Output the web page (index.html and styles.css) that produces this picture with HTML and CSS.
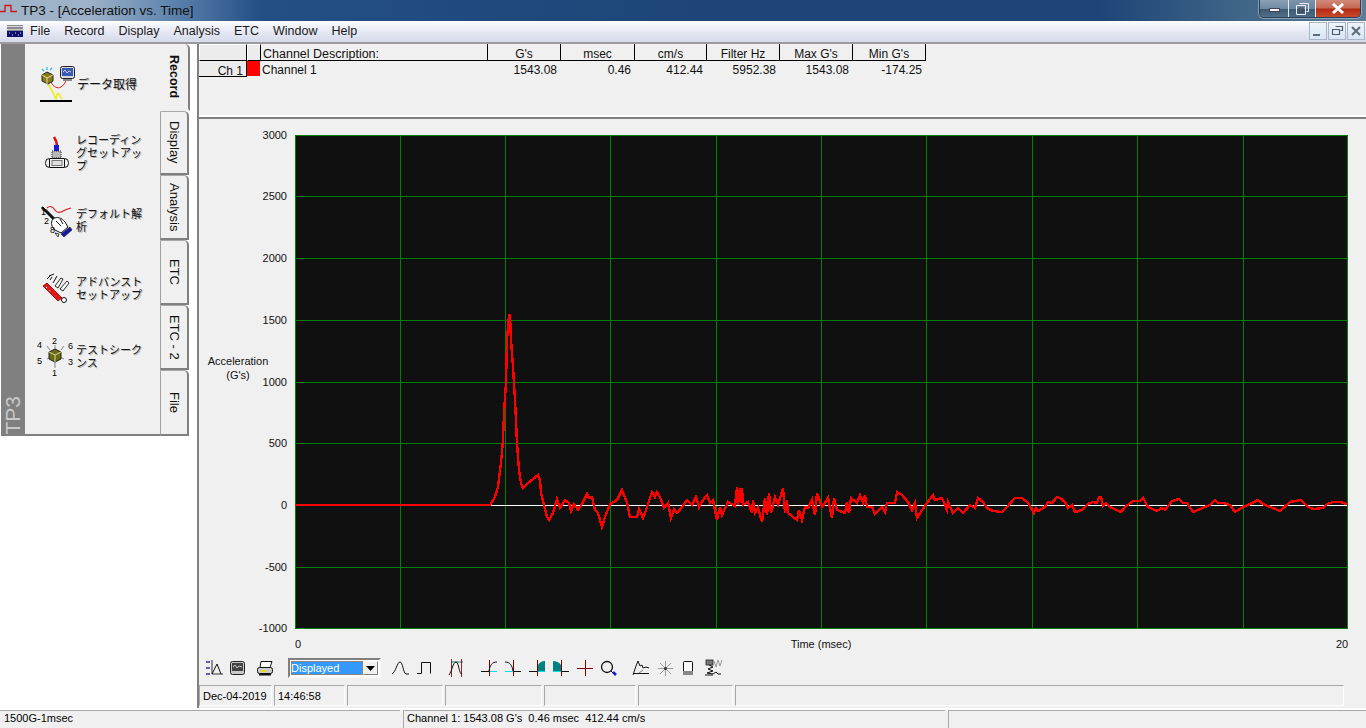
FILE: index.html
```html
<!DOCTYPE html>
<html lang="en">
<head>
<meta charset="utf-8">
<title>TP3 - [Acceleration vs. Time]</title>
<link rel="stylesheet" href="styles.css">
</head>
<body>
<div class="app">
  <header class="titlebar">
    <svg class="app-icon" width="18" height="21" viewBox="0 0 18 21"><path d="M0 11.500H5V5.500H11V11.500H17" fill="none" stroke="#d01818" stroke-width="1.400"/></svg>
    <span class="title-text">TP3 - [Acceleration vs. Time]</span>
    <div class="winbtns">
      <div class="winbtn btn-min"><span class="glyph-min"></span></div>
      <div class="winbtn btn-max"><svg width="13" height="12" viewBox="0 0 13 12"><path d="M3.500 .5h9v8h-2M.5 2.500h9v9h-9z" fill="none" stroke="#eef" stroke-width="1"/><rect x="3" y="5" width="4" height="4" fill="none" stroke="#445" /></svg></div>
      <div class="winbtn btn-close"><svg width="14" height="11" viewBox="0 0 14 11"><path d="M2 1l10 9M12 1L2 10" stroke="#fff" stroke-width="3"/></svg></div>
    </div>
  </header>

  <nav class="menubar">
    <svg class="menu-logo" width="16" height="12" viewBox="0 0 16 12"><rect width="16" height="6" fill="#8a8a90"/><rect y="1" width="16" height="1" fill="#d8d8d8"/><rect y="4" width="16" height="1" fill="#c8c8c8"/><rect y="6" width="16" height="6" fill="#10106a"/><path d="M2 8h1M5 10h1M8 8h1M11 10h1M13 8h1" stroke="#dde" stroke-width="1"/></svg>
    <span class="menu-item item-file">File</span>
    <span class="menu-item">Record</span>
    <span class="menu-item">Display</span>
    <span class="menu-item">Analysis</span>
    <span class="menu-item">ETC</span>
    <span class="menu-item">Window</span>
    <span class="menu-item">Help</span>
    <div class="mdi-btns">
      <div class="mdi-btn"><svg width="16" height="16" viewBox="0 0 16 16"><rect x="3" y="11" width="7" height="2" fill="#5f6b7a"/></svg></div>
      <div class="mdi-btn"><svg width="16" height="16" viewBox="0 0 16 16"><path d="M6.500 3.500h7v4h-2M3.500 6.500h7v5h-7z" fill="none" stroke="#4f5b6a" stroke-width="1.200"/></svg></div>
      <div class="mdi-btn"><svg width="16" height="16" viewBox="0 0 16 16"><path d="M4 4l8 8M12 4l-8 8" stroke="#5f6b7a" stroke-width="2"/></svg></div>
    </div>
  </nav>

  <main class="main">
    <aside class="left">
      <div class="panel">
        <div class="strip"><span class="strip-text">TP3</span></div>
        <div class="panel-body">
          <div class="item">
            <svg class="item-icon" width="40" height="44" viewBox="36 62 40 44">
              <path d="M42 69l2 2M47 67v3M52 68l-2 2" stroke="#28b8d8" stroke-width="1.200"/>
              <path d="M48 84C52 90 54 94 56 99C57 94 58 92 59 94C60 96 61 98 62 99" fill="none" stroke="#ecec20" stroke-width="1.600"/>
              <path d="M51 82C53 87 58 89 61 87C63 86 64 84 66 81" fill="none" stroke="#e02020" stroke-width="1"/>
              <path d="M42 75l5-3 6 3v6l-5 3-6-3z" fill="#8a7a18" stroke="#222" stroke-width="1"/>
              <path d="M42 75l5 3 6-3M47 78v6" fill="none" stroke="#e8e0a0" stroke-width="1"/>
              <rect x="60.500" y="66.500" width="14" height="12" rx="2" fill="#d8d8d8" stroke="#222"/>
              <rect x="62" y="68" width="11" height="8" fill="#3a5ab8"/>
              <path d="M63 72l2-2 2 3 2-2 2 1" fill="none" stroke="#e8e8ff" stroke-width=".8"/>
              <rect x="63" y="79" width="9" height="2" fill="#888"/>
              <rect x="40" y="100" width="32" height="2" fill="#000"/>
            </svg>
            <span class="item-text first">データ取得</span>
          </div>
          <div class="item">
            <svg class="item-icon" width="40" height="44" viewBox="36 130 40 44">
              <path d="M54 137c2 3 3 5 3 9" fill="none" stroke="#e01010" stroke-width="2.500"/>
              <rect x="54" y="145" width="5" height="6" fill="#1818d8"/>
              <rect x="52" y="151" width="9" height="7" fill="#b8b8b8" stroke="#222" stroke-dasharray="1 1"/>
              <rect x="45.500" y="158.500" width="23" height="9" rx="4" fill="#f0f0f0" stroke="#111"/>
              <path d="M49.500 159v8M64.500 159v8" stroke="#111"/>
              <rect x="52" y="160.500" width="10" height="5" fill="#e0e0e0" stroke="#777"/>
            </svg>
            <span class="item-text">レコーディン<br>グセットアッ<br>プ</span>
          </div>
          <div class="item">
            <svg class="item-icon" width="40" height="44" viewBox="36 198 40 44">
              <path d="M47 208c3-3 6-1 8 2s5 3 8 1c2-1 4-2 8-3" fill="none" stroke="#d81818" stroke-width="1.200"/>
              <path d="M42 207l16 16" stroke="#111" stroke-width="3"/>
              <path d="M43 206l3 3" stroke="#fff" stroke-width="1"/>
              <path d="M53 219c4-3 9-1 12 3l3 5-7 6-6-3c-3-3-5-7-2-11z" fill="#fff" stroke="#111"/>
              <path d="M56 221l5 5M60 219l3 5" stroke="#111"/>
              <path d="M61 234l9-7 2 3-8 7z" fill="#1818b0" stroke="#111" stroke-width=".6"/>
              <text class="icon-num" x="41" y="215">1</text>
              <text class="icon-num" x="44" y="224">2</text>
              <text class="icon-num" x="50" y="233">8</text>
              <path d="M55 233l3 4 1-3z" fill="#fff" stroke="#111" stroke-width=".8"/>
            </svg>
            <span class="item-text">デフォルト解<br>析</span>
          </div>
          <div class="item">
            <svg class="item-icon" width="40" height="44" viewBox="36 266 40 44">
              <path d="M53 283l4-7M50 280l2-3M47 279l4-4M49 276l5-2" stroke="#111" stroke-width="1"/>
              <path d="M55 286l6-8 2 1-5 9zM60 289l7-8 2 2-6 8z" fill="#fff" stroke="#111" stroke-width=".9"/>
              <path d="M43 286l4-3 15 15-4 3z" fill="#e01818" stroke="#800" stroke-width=".8"/>
              <path d="M46 287l1 1M49 290l1 1" stroke="#fff"/>
              <circle cx="64" cy="300" r="2.500" fill="#fff" stroke="#111"/>
            </svg>
            <span class="item-text">アドバンスト<br>セットアップ</span>
          </div>
          <div class="item">
            <svg class="item-icon" width="40" height="44" viewBox="36 334 40 44">
              <path d="M55 345v5M55 362v6M47 346l3 4M64 346l-3 4M47 359l4-2M64 359l-4-2" stroke="#888" stroke-width="1"/>
              <path d="M49 352l6-3 6 3v7l-6 3-6-3z" fill="#6a6a14" stroke="#222"/>
              <path d="M49 352l6 3 6-3M55 355v7" fill="none" stroke="#d8d890"/>
              <text class="icon-num" x="52" y="344">2</text>
              <text class="icon-num" x="37" y="348">4</text>
              <text class="icon-num" x="68" y="349">6</text>
              <text class="icon-num" x="37" y="364">5</text>
              <text class="icon-num" x="68" y="365">3</text>
              <text class="icon-num" x="52" y="376">1</text>
            </svg>
            <span class="item-text">テストシーク<br>ンス</span>
          </div>
        </div>
        <div class="tabs">
          <div class="tab tab-active"><span class="tab-text">Record</span></div>
          <div class="tab tab-display"><span class="tab-text">Display</span></div>
          <div class="tab tab-analysis"><span class="tab-text">Analysis</span></div>
          <div class="tab tab-etc"><span class="tab-text">ETC</span></div>
          <div class="tab tab-etc2"><span class="tab-text">ETC - 2</span></div>
          <div class="tab tab-file"><span class="tab-text">File</span></div>
        </div>
      </div>
    </aside>

    <section class="right">
      <div class="table-area">
        <div class="grid">
          <div class="hcell hcell-blank"></div>
          <div class="hcell hcell-blank"></div>
          <div class="hcell hcell-desc">Channel Description:</div>
          <div class="hcell">G's</div>
          <div class="hcell">msec</div>
          <div class="hcell">cm/s</div>
          <div class="hcell">Filter Hz</div>
          <div class="hcell">Max G's</div>
          <div class="hcell">Min G's</div>
          <div class="rcell rcell-ch">Ch 1</div>
          <div class="rcell rcell-swatch"><span class="swatch"></span></div>
          <div class="rcell rcell-desc">Channel 1</div>
          <div class="rcell num">1543.08</div>
          <div class="rcell num">0.46</div>
          <div class="rcell num">412.44</div>
          <div class="rcell num">5952.38</div>
          <div class="rcell num">1543.08</div>
          <div class="rcell num">-174.25</div>
        </div>
      </div>

      <div class="chart">
        <svg class="chart-svg" width="1167" height="536" viewBox="199 119 1167 536">
          <rect x="295" y="135" width="1052" height="494" fill="#101010"/>
          <g class="gridlines">
            <path d="M295.500 135V629M400.500 135V629M505.500 135V629M610.500 135V629M716.500 135V629M821.500 135V629M926.500 135V629M1032.500 135V629M1137.500 135V629M1243.500 135V629M1347.500 135V629"/>
            <path d="M295 135.500H1348M295 196.500H1348M295 258.500H1348M295 320.500H1348M295 382.500H1348M295 443.500H1348M295 567.500H1348M295 628.500H1348"/>
          </g>
          <rect x="490" y="505" width="857" height="1" fill="#ffffff"/>
          <polyline class="trace" points="295,505 490,505 495,497 498,487 501,463 503,440 504,413 506,383 507,340 509,315 510,315 511,340 513,367 515,400 517,443 519,470 521,483 523,488 528,483 533,479 538,475 540,480 541,493 544,505 547,517 549,520 553,513 557,499 560,508 565,500 569,503 571,511 574,504 578,510 582,504 587,494 589,498 592,497 595,510 598,513 602,527 605,517 610,504 617,500 622,490 627,503 630,517 637,517 639,509 643,518 646,510 652,492 655,497 657,492 660,497 664,508 668,503 671,518 674,509 677,513 682,507 687,500 692,505 696,497 699,507 703,500 707,495 710,503 713,500 717,520 720,507 722,515 728,502 735,506 737,487 738,505 740,488 741,503 742,488 743,505 748,502 752,513 753,500 755,513 758,508 762,522 765,498 767,515 769,493 771,513 775,497 778,505 783,488 785,513 787,500 788,513 797,520 799,510 802,520 805,507 808,508 812,500 815,515 817,493 822,507 825,503 828,498 832,518 834,498 837,510 845,513 847,502 849,513 851,498 857,503 860,495 863,503 865,495 867,507 872,507 875,514 882,507 885,512 887,503 895,503 897,492 902,495 908,502 912,510 915,503 917,518 922,510 927,503 933,495 935,500 942,498 947,510 948,502 953,513 958,508 963,513 970,505 975,508 978,498 983,502 987,508 993,511 1002,512 1007,507 1015,498 1022,498 1028,503 1034,513 1036,508 1038,511 1045,507 1048,502 1052,503 1057,497 1060,498 1065,502 1068,508 1072,505 1075,512 1082,510 1088,504 1093,502 1097,503 1099,497 1101,497 1103,506 1106,503 1110,507 1121,512 1125,507 1133,501 1140,501 1143,498 1148,507 1157,511 1162,508 1165,510 1172,501 1179,499 1183,503 1187,503 1193,512 1200,509 1210,505 1215,500 1218,503 1223,503 1230,505 1235,512 1243,507 1250,504 1258,500 1263,504 1270,507 1280,511 1290,502 1301,500 1308,507 1313,509 1323,508 1327,504 1333,502 1340,502 1347,504"/>
          <g class="ylabels">
            <text x="287" y="139">3000</text>
            <text x="287" y="200">2500</text>
            <text x="287" y="262">2000</text>
            <text x="287" y="324">1500</text>
            <text x="287" y="386">1000</text>
            <text x="287" y="447">500</text>
            <text x="287" y="509">0</text>
            <text x="287" y="571">-500</text>
            <text x="287" y="632">-1000</text>
          </g>
          <g class="axis-title">
            <text x="238" y="365">Acceleration</text>
            <text x="238" y="379">(G's)</text>
            <text x="821" y="648">Time (msec)</text>
            <text x="298" y="648">0</text>
            <text x="1342" y="648">20</text>
          </g>
        </svg>
      </div>

      <div class="toolbar">
        <div class="tgroup tg-a">
          <svg class="ti" width="24" height="24" viewBox="0 0 24 24"><path d="M5 6h4M5 12h4M5 18h4" stroke="#2a2ab0" stroke-width="1.500"/><path d="M11 4v14h11" fill="none" stroke="#333"/><path d="M11 18l5-10 4 10" fill="none" stroke="#111"/></svg>
          <svg class="ti" width="24" height="24" viewBox="0 0 24 24"><rect x="5.500" y="5.500" width="14" height="13" rx="2" fill="#c8c8c8" stroke="#222"/><rect x="7" y="7" width="11" height="8" fill="#444"/><path d="M8 11l2-2 2 3 2-2 3 1" fill="none" stroke="#ccc"/></svg>
        </div>
        <div class="tgroup tg-b">
          <svg class="ti" width="24" height="24" viewBox="0 0 24 24"><path d="M8 5.500h11l-2 6H7z" fill="#fff" stroke="#111"/><rect x="4.500" y="11.500" width="15" height="6" rx="2" fill="#ccc" stroke="#111"/><rect x="8" y="14" width="5" height="2" fill="#e8d820"/><path d="M6 18.500h12" stroke="#111" stroke-width="2"/></svg>
        </div>
        <div class="select">
          <div class="select-field"><span class="select-text">Displayed</span></div>
          <div class="select-arrow"><svg width="9" height="5" viewBox="0 0 9 5"><path d="M0 0h9L4.500 5z" fill="#000"/></svg></div>
        </div>
        <div class="tgroup tg-c">
          <svg class="ti" width="24" height="24" viewBox="0 0 24 24"><path d="M3 18C7 16 8 6 11 6C14 6 14 17 17 18L20 18" fill="none" stroke="#111"/></svg>
          <svg class="ti" width="24" height="24" viewBox="0 0 24 24"><path d="M4 17.500H8.500V6.500H17.500V17.500" fill="none" stroke="#111"/></svg>
        </div>
        <div class="tgroup tg-d">
          <svg class="ti" width="24" height="24" viewBox="0 0 24 24"><path d="M7 6H19" stroke="#008080"/><path d="M7.500 3V21M17.500 3V21" stroke="#a02020"/><path d="M5 19C8 15 9 6 12 6C15 6 15 19 18 18" fill="none" stroke="#111"/></svg>
        </div>
        <div class="tgroup tg-e">
          <svg class="ti" width="24" height="24" viewBox="0 0 24 24"><path d="M3 15.500H19" stroke="#111"/><path d="M12 15.500H19" stroke="#00e0e8"/><path d="M11.500 4V20" stroke="#800000"/><path d="M11 15C12 9 14 6 19 6" fill="none" stroke="#111"/></svg>
          <svg class="ti" width="24" height="24" viewBox="0 0 24 24"><path d="M3 15.500H19" stroke="#111"/><path d="M3 15.500H11" stroke="#00e0e8"/><path d="M11.500 4V20" stroke="#800000"/><path d="M3 6C8 6 10 9 11 15" fill="none" stroke="#111"/></svg>
          <svg class="ti" width="24" height="24" viewBox="0 0 24 24"><path d="M12 15V9C14 6 16 5 19 5V15z" fill="#008080"/><path d="M3 15.500H19" stroke="#111"/><path d="M12 15.500H19" stroke="#00e0e8"/><path d="M11.500 4V20" stroke="#800000"/></svg>
          <svg class="ti" width="24" height="24" viewBox="0 0 24 24"><path d="M3 5C6 5 9 6 11 9V15H3z" fill="#008080"/><path d="M3 15.500H19" stroke="#111"/><path d="M3 15.500H11" stroke="#00e0e8"/><path d="M11.500 4V20" stroke="#800000"/></svg>
          <svg class="ti" width="24" height="24" viewBox="0 0 24 24"><path d="M3 12.500H19M11.500 4V20" stroke="#800000"/></svg>
          <svg class="ti" width="24" height="24" viewBox="0 0 24 24"><circle cx="9" cy="11" r="5.500" fill="none" stroke="#111" stroke-width="1.300"/><path d="M13 15l2 2" stroke="#111"/><path d="M15 16l3 3" stroke="#1818d0" stroke-width="2.500"/></svg>
        </div>
        <div class="tgroup tg-f">
          <svg class="ti" width="24" height="24" viewBox="0 0 24 24"><path d="M4 17.500H20" stroke="#111"/><path d="M4 19L7 10 9 5 11 10 13 9 14 12 17 11 20 12" fill="none" stroke="#111"/><path d="M10 17l4-3" stroke="#777"/></svg>
          <svg class="ti" width="24" height="24" viewBox="0 0 24 24"><path d="M5 12.500H20M12.500 5V20M7 7l11 11M18 7L7 18" stroke="#9a9a9a"/><circle cx="12.500" cy="12.500" r="1.500" fill="#333"/></svg>
          <svg class="ti" width="24" height="24" viewBox="0 0 24 24"><rect x="6.500" y="5.500" width="9" height="13" rx="1" fill="#f8f8f8" stroke="#111"/><rect x="6" y="15" width="10" height="4" fill="#888"/></svg>
          <svg class="ti" width="24" height="24" viewBox="0 0 24 24"><rect x="5" y="4" width="7" height="5" fill="#777" stroke="#222" stroke-width=".8"/><path d="M8 9l4 2-5 2 5 2-6 2 6 1 3-2 2 2h3M4 19h8" fill="none" stroke="#111"/><path d="M13 5l2 6 2-7 2 6 2-6" fill="none" stroke="#999"/></svg>
        </div>
      </div>

      <div class="inner-status">
        <div class="scell sc-date">Dec-04-2019</div>
        <div class="scell sc-time">14:46:58</div>
        <div class="scell sc-a"></div>
        <div class="scell sc-b"></div>
        <div class="scell sc-c"></div>
        <div class="scell sc-d"></div>
        <div class="scell sc-e"></div>
      </div>
    </section>
  </main>

  <footer class="statusbar">
    <div class="ocell oc-a">1500G-1msec</div>
    <div class="ocell oc-b">Channel 1: 1543.08 G's&nbsp;&nbsp;0.46 msec&nbsp;&nbsp;412.44 cm/s</div>
    <div class="ocell oc-c"></div>
  </footer>
</div>
</body>
</html>
```
FILE: styles.css
```css
* { box-sizing: border-box; }
html, body { margin: 0; padding: 0; height: 100%; overflow: hidden; }
body { font-family: "Liberation Sans", Arial, sans-serif; font-size: 12px; color: #000; background: #f0f0f0; }
.app { width: 1366px; height: 728px; display: flex; flex-direction: column; }

.titlebar {
  height: 21px; flex: none; display: flex; align-items: flex-start;
  background: linear-gradient(90deg, #9fb3c9 0, #9db2c8 90px, #5f84ae 170px, #234f86 260px, #1d4577 700px, #1d4577 1100px, #3f6587 1240px, #5b7d98 1366px);
}
.app-icon { flex: none; }
.title-text { margin-left: 3px; font-size: 13.500px; line-height: 21px; color: #111; white-space: nowrap; }
.winbtns { margin-left: auto; margin-right: 5px; display: flex; height: 18px; border: 1px solid #2a3f56; border-top: 0; border-radius: 0 0 5px 5px; overflow: hidden; box-shadow: 0 0 0 1px rgba(255,255,255,.35); }
.winbtn { display: flex; align-items: center; justify-content: center; height: 100%; }
.btn-min { width: 29px; background: linear-gradient(#8aa0b4 0, #6f8aa2 50%, #3b5a76 55%, #536f88 100%); border-right: 1px solid #e0e8f0; }
.glyph-min { width: 11px; height: 4px; margin-top: 3px; background: #f4f4f4; border: 1px solid #445; }
.btn-max { width: 27px; background: linear-gradient(#7a93aa 0, #6a859e 50%, #3b5a76 55%, #4f6c85 100%); border-right: 1px solid #e0e8f0; }
.btn-close { width: 44px; background: linear-gradient(#d08a78 0, #c66a55 45%, #b32b12 55%, #c74a2e 100%); }

.menubar {
  height: 23px; flex: none; display: flex; align-items: center; padding-left: 7px; padding-bottom: 2px;
  background: linear-gradient(#fdfdfe 0, #eef0f8 30%, #d8dcec 90%, #d8dcec 100%);
  border-bottom: 2px solid #9a9aa0;
}
.menu-logo { flex: none; margin-right: 7px; }
.menu-item { margin-right: 14px; font-size: 12.500px; line-height: 18px; color: #1a1a1a; white-space: nowrap; }
.mdi-btns { margin-left: auto; display: flex; gap: 1px; padding-right: 1px; }
.mdi-btn { width: 18px; height: 18px; display: flex; align-items: center; justify-content: center; background: linear-gradient(#eef4fa, #d6e6f4); border: 1px solid #aab4c4; }

.main { flex: 1; display: flex; min-height: 0; }
.left { width: 197px; flex: none; background: #fff; }
.panel { height: 392px; display: flex; }
.strip { width: 25px; flex: none; display: flex; align-items: flex-end; justify-content: center; background: #808080; border-left: 1px solid #ffffff; }
.strip-text { writing-mode: vertical-rl; transform: rotate(180deg); font-size: 21px; line-height: 22px; color: #c8c8c8; padding-top: 1px; }
.panel-body { width: 135px; flex: none; padding-top: 6px; background: #f0f0f0; border-bottom: 2px solid #808080; }
.item { height: 68px; display: flex; align-items: center; padding-left: 11px; }
.item-icon { flex: none; }
.icon-num { font-family: "Liberation Sans", Arial, sans-serif; font-size: 9px; fill: #000; }
.item-text { margin-left: 0; font-family: "Noto Sans CJK JP", "Liberation Sans", sans-serif; font-size: 11px; line-height: 13px; color: #111; white-space: nowrap; text-shadow: 1px 1px 0 #b0b0b0; }
.item-text.first { font-size: 12px; margin-left: 1px; margin-top: -2px; }

.tabs { width: 30px; flex: none; display: flex; flex-direction: column; }
.tab { display: flex; align-items: center; justify-content: center; width: 29px; background: #f0f0f0; border: 1px solid #a8a8a8; border-right: 2px solid #808080; border-bottom: 2px solid #808080; border-left-color: #a0a0a0; border-radius: 0 5px 0 0; }
.tab-text { writing-mode: vertical-rl; font-size: 13px; line-height: 15px; white-space: nowrap; color: #111; margin-left: 1px; }
.tab-active { height: 67px; width: 31px; margin-left: -1px; border-left: 0; border-top: 0; border-bottom-color: #f0f0f0; padding-right: 1px; }
.tab-active .tab-text { font-weight: bold; font-size: 12.500px; margin-left: 1px; }
.tab-display { height: 64px; }
.tab-analysis { height: 65px; }
.tab-etc { height: 65px; }
.tab-etc2 { height: 65px; }
.tab-file { height: 66px; }

.right { flex: 1; min-width: 0; display: flex; flex-direction: column; border-left: 2px solid #808080; }
.table-area { height: 75px; flex: none; border-bottom: 2px solid #808080; box-shadow: inset 0 -2px 0 #ffffff; }
.grid { display: grid; grid-template-columns: 48px 14px 227px 73px 74px 72px 73px 73px 73px; grid-template-rows: 17px 16px; }
.hcell { border-right: 1px solid #000; border-bottom: 1px solid #000; text-align: center; font-size: 12px; line-height: 21px; height: 17px; overflow: hidden; color: #111; }
.hcell-blank { background: #ececec; border-top: 1px solid #fff; border-left: 1px solid #fff; }
.hcell-desc { text-align: left; padding-left: 2px; font-size: 12.500px; }
.rcell { font-size: 12px; line-height: 16px; color: #111; white-space: nowrap; }
.rcell-ch { text-align: right; padding-right: 3px; background: #ececec; border-right: 1px solid #000; border-bottom: 1px solid #000; line-height: 20px; }
.rcell-swatch { display: flex; }
.swatch { width: 13px; height: 15px; background: #ff0000; }
.rcell-desc { padding-left: 1px; line-height: 19px; }
.num { text-align: right; padding-right: 4px; line-height: 19px; }

.chart { flex: 1; min-height: 0; }
.chart-svg { display: block; }
.gridlines path { fill: none; stroke: #008000; stroke-width: 1; }
.trace { fill: none; stroke: #ff0000; stroke-width: 2.400; stroke-linejoin: miter; shape-rendering: crispEdges; }
.ylabels text { font-size: 11px; text-anchor: end; fill: #111; }
.axis-title text { font-size: 11px; text-anchor: middle; fill: #111; }

.toolbar { height: 28px; flex: none; display: flex; align-items: center; padding-bottom: 4px; }
.tgroup { display: flex; flex: none; }
.ti { display: block; flex: none; }
.tg-a { margin-left: 2px; }
.tg-b { margin-left: 4px; }
.select { margin-left: 11px; width: 93px; height: 20px; flex: none; display: flex; border: 2px solid #808080; border-right-color: #f8f8f8; border-bottom-color: #f8f8f8; background: #fff; padding: 1px; }
.select-field { flex: 1; background: #3399ff; outline: 1px dotted #e07000; outline-offset: -1px; }
.select-text { display: block; padding-left: 0; font-size: 11px; line-height: 14px; color: #fff; }
.select-arrow { width: 15px; flex: none; display: flex; align-items: center; justify-content: center; background: #f0f0f0; border: 1px solid #808080; border-top-color: #fff; border-left-color: #fff; }
.tg-c { margin-left: 8px; }
.tg-d { margin-left: 7px; }
.tg-e { margin-left: 10px; }
.tg-f { margin-left: 7px; }

.inner-status { height: 24px; flex: none; display: flex; gap: 2px; padding: 1px 0 2px 0; }
.scell { height: 21px; padding-left: 3px; font-size: 11px; line-height: 20px; border: 1px solid #a8a8a8; border-right-color: #fff; border-bottom-color: #fff; white-space: nowrap; }
.sc-date { width: 73px; }
.sc-time { width: 71px; }
.sc-a { width: 96px; }
.sc-b { width: 97px; }
.sc-c { width: 92px; }
.sc-d { width: 95px; }
.sc-e { width: 609px; }

.statusbar { height: 20px; flex: none; display: flex; gap: 3px; border-top: 2px solid #ffffff; }
.ocell { height: 18px; padding-left: 3px; font-size: 11px; line-height: 15px; border-top: 1px solid #a8a8a8; border-left: 1px solid #a8a8a8; white-space: nowrap; }
.oc-a { width: 400px; border-left: 0; padding-left: 4px; }
.oc-b { width: 542px; }
.oc-c { flex: 1; }
```
